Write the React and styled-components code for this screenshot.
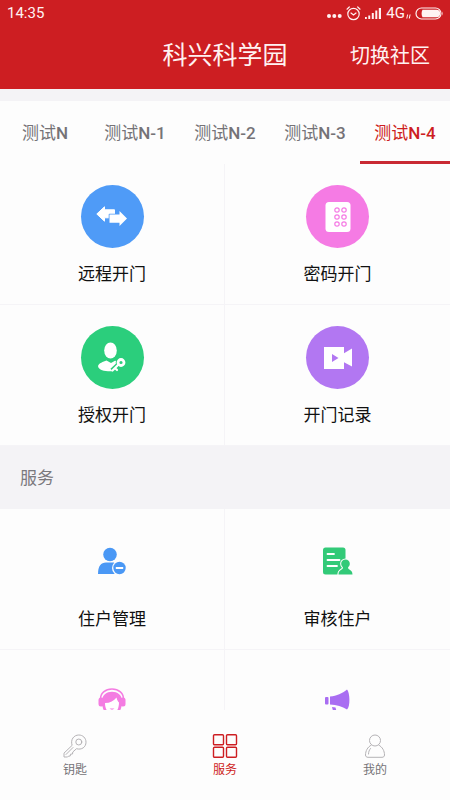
import React, { useState } from "react";
import styled, { createGlobalStyle } from "styled-components";

const GlobalStyle = createGlobalStyle`
  * {
    box-sizing: border-box;
  }
  body {
    margin: 0;
    background: #fdfdfd;
    font-family: Roboto, "Noto Sans CJK SC", sans-serif;
  }
  button {
    margin: 0;
    padding: 0;
    border: 0;
    background: none;
    font-family: inherit;
    cursor: pointer;
  }
  svg {
    display: block;
  }
`;

const Page = styled.div`
  display: flex;
  flex-direction: column;
  height: 100vh;
`;

const Header = styled.header`
  flex: none;
  background: #cd1e22;
  color: #fff2f2;
`;

const StatusBar = styled.div`
  display: flex;
  align-items: center;
  justify-content: space-between;
  height: 26px;
  padding: 0 7px;
  font-size: 15px;
`;

const StatusIcons = styled.div`
  display: flex;
  align-items: center;
  gap: 4px;
`;

const Network = styled.span`
  display: flex;
  align-items: center;
  gap: 1px;
`;

const NavBar = styled.div`
  display: grid;
  grid-template-columns: 1fr auto 1fr;
  align-items: center;
  height: 63px;
  padding: 0 20px 4px;
`;

const Title = styled.h1`
  grid-column: 2;
  margin: 0;
  font-size: 25px;
  font-weight: 400;
  line-height: 36px;
`;

const SwitchBtn = styled.button`
  justify-self: end;
  color: inherit;
  font-size: 20px;
  line-height: 30px;
`;

const Content = styled.main`
  flex: 1;
  min-height: 0;
  overflow-y: auto;
  scrollbar-width: none;
`;

const Tabs = styled.div`
  display: flex;
  border-top: 12px solid #f4f3f6;
`;

const Tab = styled.button`
  flex: 1;
  height: 63px;
  padding-top: 3px;
  border-bottom: 3px solid ${(props) => (props.$on ? "#c92a33" : "transparent")};
  color: ${(props) => (props.$on ? "#cd1e22" : "#757377")};
  font-size: 17px;
  line-height: 24px;
`;

const TabNo = styled.span`
  font-weight: 500;
`;

const Grid = styled.div`
  display: grid;
  grid-template-columns: 1fr 1fr;
`;

const Cell = styled.button`
  display: flex;
  flex-direction: column;
  align-items: center;
  gap: ${(props) => (props.$plain ? "32px" : "14px")};
  height: 141px;
  padding-top: ${(props) => (props.$plain ? "38px" : "21px")};
  border-bottom: 1px solid #f5f4f7;
  color: #111;
  font-size: 17px;
  line-height: 24px;

  &:nth-child(odd) {
    border-right: 1px solid #f5f4f7;
  }
`;

const Circle = styled.span`
  display: flex;
  align-items: center;
  justify-content: center;
  width: 63px;
  height: 63px;
  border-radius: 50%;
  background: ${(props) => props.$bg};
`;

const SectionTitle = styled.h2`
  margin: 0;
  padding: 20px 20px 19px;
  background: #f4f3f6;
  color: #7b797d;
  font-size: 17px;
  font-weight: 400;
  line-height: 24px;
`;

const BottomBar = styled.nav`
  display: flex;
  flex: none;
  height: 90px;
  padding-top: 24px;
  background: #fdfdfd;
`;

const BottomLink = styled.a`
  display: flex;
  flex: 1;
  flex-direction: column;
  align-items: center;
  gap: 3px;
  color: ${(props) => (props.$on ? "#cd1e22" : "#757377")};
  font-size: 12px;
  line-height: 18px;
  text-decoration: none;
`;

const DotsIcon = () => (
  <svg width="15" height="14" fill="currentColor">
    <circle cx="2" cy="10" r="2" />
    <circle cx="7.3" cy="10" r="2" />
    <circle cx="12.7" cy="10" r="2" />
  </svg>
);

const AlarmIcon = () => (
  <svg width="15" height="15" fill="none" stroke="currentColor" strokeWidth="1.2" strokeLinecap="round">
    <circle cx="7.5" cy="8" r="5.7" />
    <path d="M5 7l2.5 2L10 7M1 3.2L3.3 1M14 3.2L11.7 1" />
  </svg>
);

const SignalIcon = () => (
  <svg width="17" height="12" fill="currentColor">
    <path d="M0 10h1.800v2H0zM3.300 8.500h1.900V12H3.300zM6.800 6h2v6h-2zM10.300 3.500h2V12h-2zM13.800 1h2.200v11h-2.200z" />
  </svg>
);

const DataIcon = () => (
  <svg width="5" height="12" fill="none" stroke="currentColor" strokeWidth="1">
    <path d="M.8 11.500l.8-4M3.300 11.500l.8-4" />
  </svg>
);

const BatteryIcon = () => (
  <svg width="28" height="13">
    <rect x="1" y="1" width="25" height="11" rx="5.500" fill="none" stroke="currentColor" strokeWidth="1.200" />
    <path d="M7.500 2.800h14a3.700 3.700 0 0 1 0 7.400h-14C6.300 8 6.300 5 7.500 2.800z" fill="currentColor" />
    <path d="M27 4.500c.8 1 .8 3 0 4z" fill="currentColor" />
  </svg>
);

const ArrowsIcon = () => (
  <svg width="32" height="21" viewBox="0 0 32 21" fill="#fff" strokeLinejoin="round">
    <path d="M.8 8L8.500.8v3H18.500v8h-10v3.400z" stroke="#fff" />
    <path
      d="M13.500 8.500h10V5l7.500 7.500-7.500 7.500v-3.300h-10z"
      stroke="#4f9bf7"
      strokeWidth="1.600"
      paintOrder="stroke"
    />
  </svg>
);

const KeypadIcon = () => (
  <svg width="26" height="30" viewBox="0 0 26 30">
    <rect x="0.500" y="0" width="25" height="30" rx="3.500" fill="#fff" />
    <g fill="none" stroke="#f57be4" strokeWidth="1.200">
      {[8, 15, 22].map((y) => (
        <React.Fragment key={y}>
          <circle cx="12" cy={y} r="2.200" />
          <circle cx="19" cy={y} r="2.200" />
        </React.Fragment>
      ))}
    </g>
  </svg>
);

const PersonKeyIcon = () => (
  <svg width="30" height="32" viewBox="0 0 30 32">
    <ellipse cx="13.500" cy="8.500" rx="6.300" ry="8" fill="#fff" />
    <path d="M1 24c1-3 5-4 8.500-5.500l4.500 2.500 4-2.300 3 .5v4l-6 6C9 29.500 1.500 28.500 1 24z" fill="#fff" />
    <g stroke="#2bce7c" fill="none">
      <circle cx="24" cy="20.500" r="3" strokeWidth="4.600" />
      <path d="M21.500 22.500L15 28.500" strokeWidth="4.600" />
    </g>
    <g stroke="#fff" fill="none">
      <circle cx="24" cy="20.500" r="3" strokeWidth="2.800" />
      <path d="M21.500 22.500L15.500 28.500M18 26l2 2" strokeWidth="2.200" strokeLinecap="round" />
    </g>
  </svg>
);

const VideoIcon = () => (
  <svg width="30" height="24" viewBox="0 0 30 24">
    <path d="M1 1h20v6.200l8-4.700v18l-8-4.200V23H1z" fill="#fff" />
    <path d="M9 8l6.500 4L9 16z" fill="#b277f2" />
  </svg>
);

const ResidentIcon = () => (
  <svg width="28" height="28" viewBox="0 0 28 28" fill="#4a98f5">
    <circle cx="12" cy="7.500" r="6.800" />
    <path d="M0 27c0-8 3-11.500 8-11.500h8L18 27z" />
    <circle cx="21.500" cy="21" r="7.500" fill="#fdfdfd" />
    <circle cx="21.500" cy="21" r="6.200" />
    <path d="M17.800 20h7.400v2h-7.400z" fill="#fff" />
  </svg>
);

const ReviewIcon = () => (
  <svg width="30" height="28" viewBox="0 0 30 28">
    <rect x="0" y="0.500" width="22.500" height="27" rx="2.500" fill="#32ca78" />
    <path d="M4.500 7h6.500M4.500 13h12M4.500 19h9.500" stroke="#fff" strokeWidth="1.800" strokeLinecap="round" />
    <path
      d="M22.500 12.500c2.500 0 4.300 1.800 4.300 4.200 0 1.500-.7 2.500-1.700 3.500-.4 3 4.400 2 4.400 7.300H15.500c0-5.300 4.800-4.300 4.400-7.300-1-1-1.700-2-1.700-3.500 0-2.400 1.800-4.200 4.300-4.200z"
      fill="#32ca78"
      stroke="#fdfdfd"
      strokeWidth="2.200"
      paintOrder="stroke"
    />
  </svg>
);

const ServiceIcon = () => (
  <svg width="28" height="28" viewBox="0 0 28 28">
    <path d="M2.500 12C2 5 7.500 1 14 1s12 4 11.500 11" fill="none" stroke="#f47ce2" strokeWidth="1.500" />
    <path d="M4.500 11c0-4 4-7.300 9.500-7.300s9.500 3.300 9.500 7.300v6c0 5-3 8-6 9h-7c-3-1-6-4-6-9z" fill="#f47ce2" />
    <rect x="0.500" y="9.500" width="5.500" height="9" rx="2.500" fill="#f47ce2" />
    <rect x="22" y="9.500" width="5.500" height="9" rx="2.500" fill="#f47ce2" />
    <path d="M7 15c5 0 9-2 11.500-5.500.5 2.500 1.500 4 2.500 5 0 6-2.500 11-7 11s-7-5-7-10.500z" fill="#fff" />
    <path d="M11.500 20.500c1.500 1.500 3.500 1.500 5 0z" fill="#f47ce2" />
  </svg>
);

const HornIcon = () => (
  <svg width="28" height="28" viewBox="0 0 28 28" fill="#a96df2">
    <rect x="1" y="9" width="3.500" height="7.500" rx="1" />
    <path d="M6 8.500c7-.5 12-3 17-7 3 3 3.500 17.500 0 20-5-3-10-4.500-17-5z" />
    <path d="M8 19l3.500.5 2 7h-3.500z" />
  </svg>
);

const KeyIcon = () => (
  <svg width="24" height="24" viewBox="0 0 24 24" fill="none" stroke="#b5b3b6" strokeLinecap="round" strokeLinejoin="round">
    <path d="M9 11C7.200 5.500 11 1 15.800 1c4 0 7.200 3 7.200 7.200 0 5-4.500 8-9.500 6.500L9.800 18l-.3 2-2 .2-.3 1.800-1.800.2-.8.8H1v-3.500z" />
    <circle cx="15.800" cy="8" r="3" />
    <path d="M3 20.500l7-7" />
  </svg>
);

const GridIcon = () => (
  <svg width="26" height="24" viewBox="0 0 26 24" fill="none" stroke="currentColor" strokeWidth="1.400">
    <rect x="1.500" y="0.700" width="10" height="10" rx="1" />
    <rect x="14.500" y="0.700" width="10" height="10" rx="1" />
    <rect x="1.500" y="13.300" width="10" height="10" rx="1" />
    <rect x="14.500" y="13.300" width="10" height="10" rx="1" />
  </svg>
);

const MeIcon = () => (
  <svg width="24" height="24" viewBox="0 0 24 24" fill="none" stroke="#b5b3b6">
    <circle cx="12" cy="6.500" r="5.500" />
    <path d="M8.500 11C4.500 13 2.500 17 2.500 21c0 1.500 1 2.300 2.500 2.300h14c1.500 0 2.500-.8 2.500-2.300 0-4-2-8-6-10" />
    <path d="M5.500 20c0-2 .7-4 2-5.500" strokeLinecap="round" />
  </svg>
);

const tabs = ["N", "N-1", "N-2", "N-3", "N-4"];

const doors = [
  { name: "远程开门", bg: "#4f9bf7", icon: <ArrowsIcon /> },
  { name: "密码开门", bg: "#f57be4", icon: <KeypadIcon /> },
  { name: "授权开门", bg: "#2bce7c", icon: <PersonKeyIcon /> },
  { name: "开门记录", bg: "#b277f2", icon: <VideoIcon /> },
];

const services = [
  { id: "resident", name: "住户管理", icon: <ResidentIcon /> },
  { id: "review", name: "审核住户", icon: <ReviewIcon /> },
  { id: "support", icon: <ServiceIcon /> },
  { id: "notice", icon: <HornIcon /> },
];

const links = [
  { name: "钥匙", href: "#key", icon: <KeyIcon /> },
  { name: "服务", href: "#service", icon: <GridIcon /> },
  { name: "我的", href: "#me", icon: <MeIcon /> },
];

const App = () => {
  let [tab, setTab] = useState(4);
  let [page, setPage] = useState(1);

  return (
    <Page>
      <GlobalStyle />
      <Header>
        <StatusBar>
          <span>14:35</span>
          <StatusIcons>
            <DotsIcon />
            <AlarmIcon />
            <SignalIcon />
            <Network>
              4G
              <DataIcon />
            </Network>
            <BatteryIcon />
          </StatusIcons>
        </StatusBar>
        <NavBar>
          <Title>科兴科学园</Title>
          <SwitchBtn>切换社区</SwitchBtn>
        </NavBar>
      </Header>

      <Content>
        <Tabs role="tablist">
          {tabs.map((no, i) => (
            <Tab key={no} role="tab" aria-selected={tab === i} $on={tab === i} onClick={() => setTab(i)}>
              测试<TabNo>{no}</TabNo>
            </Tab>
          ))}
        </Tabs>
        <Grid>
          {doors.map((item) => (
            <Cell key={item.name}>
              <Circle $bg={item.bg}>{item.icon}</Circle>
              {item.name}
            </Cell>
          ))}
        </Grid>
        <SectionTitle>服务</SectionTitle>
        <Grid>
          {services.map((item) => (
            <Cell key={item.id} $plain aria-label={item.name || item.id}>
              {item.icon}
              {item.name}
            </Cell>
          ))}
        </Grid>
      </Content>

      <BottomBar>
        {links.map((item, i) => (
          <BottomLink key={item.name} href={item.href} $on={page === i} onClick={() => setPage(i)}>
            {item.icon}
            {item.name}
          </BottomLink>
        ))}
      </BottomBar>
    </Page>
  );
};

export default App;
